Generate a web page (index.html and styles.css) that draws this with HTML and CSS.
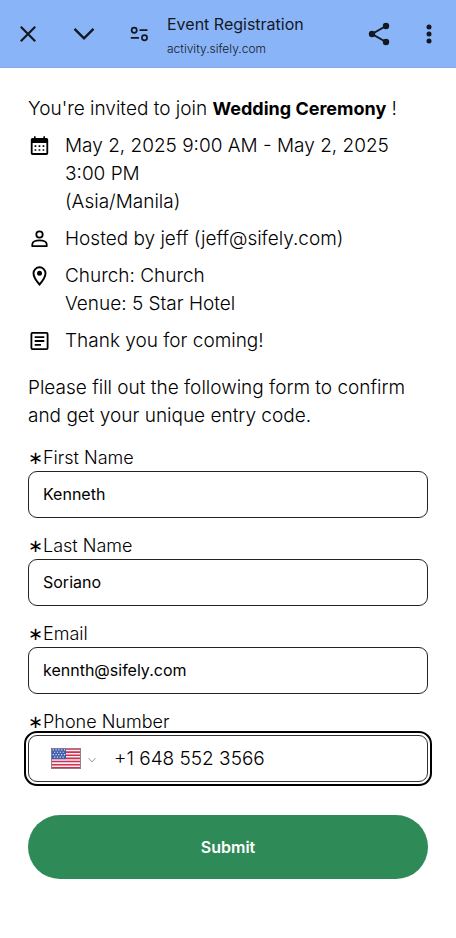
FILE: index.html
```html
<!DOCTYPE html>
<html lang="en">
<head>
<meta charset="utf-8">
<meta name="viewport" content="width=device-width, initial-scale=1">
<title>Event Registration</title>
<link rel="stylesheet" href="styles.css">
</head>
<body>
<header class="bar">
  <button class="bar-btn" type="button" aria-label="Close"><svg width="24" height="24" viewBox="0 0 24 24"><path d="M4.800 4.800 19.200 19.200M19.200 4.800 4.800 19.200" fill="none" stroke="currentColor" stroke-width="2.200"/></svg></button>
  <button class="bar-btn" type="button" aria-label="Minimize"><svg width="24" height="24" viewBox="0 0 24 24"><path d="M2.500 6.800 12 16.300 21.500 6.800" fill="none" stroke="currentColor" stroke-width="2.400"/></svg></button>
  <button class="bar-btn" type="button" aria-label="Site settings"><svg width="24" height="24" viewBox="0 0 24 24"><g fill="none" stroke="currentColor" stroke-width="1.700"><circle cx="6.200" cy="8.200" r="2.600"/><path d="M11.500 8.200H19.500M2.800 15.800H11"/><circle cx="16.500" cy="15.800" r="2.600"/></g></svg></button>
  <div class="bar-text">
    <h1 class="bar-title">Event Registration</h1>
    <span class="bar-host">activity.sifely.com</span>
  </div>
  <button class="bar-btn" type="button" aria-label="Share"><svg width="24" height="24" viewBox="0 0 24 24"><path d="M19 4 5 12 19 20" fill="none" stroke="currentColor" stroke-width="2"/><g fill="currentColor"><circle cx="19" cy="4" r="3.200"/><circle cx="5" cy="12" r="3.200"/><circle cx="19" cy="20" r="3.200"/></g></svg></button>
  <button class="bar-btn" type="button" aria-label="More options"><svg width="24" height="24" viewBox="0 0 24 24" fill="currentColor"><circle cx="12" cy="5" r="2.500"/><circle cx="12" cy="12" r="2.500"/><circle cx="12" cy="19" r="2.500"/></svg></button>
</header>
<main class="page">
  <p class="intro">You're invited to join <strong>Wedding Ceremony</strong> !</p>
  <ul class="details">
    <li class="detail">
      <svg class="detail-icon" width="24" height="24" viewBox="0 0 24 24"><path fill="currentColor" fill-rule="evenodd" d="M6 2.200h1.600v1.900h7.800V2.200H17v1.900h1.500a1.700 1.700 0 0 1 1.700 1.700v13.400a1.700 1.700 0 0 1-1.700 1.700h-14a1.700 1.700 0 0 1-1.700-1.700V5.800a1.700 1.700 0 0 1 1.700-1.700H6zM4.600 9v10h13.800V9z"/><path stroke="currentColor" stroke-width="1.700" d="M6.600 12.200h1.700m2.300 0h1.700m2.300 0h1.700M6.600 16h1.700m2.300 0h1.700m2.300 0h1.700"/></svg>
      <span>May 2, 2025 9:00 AM - May 2, 2025 3:00 PM<br>(Asia/Manila)</span>
    </li>
    <li class="detail">
      <svg class="detail-icon" width="24" height="24" viewBox="0 0 24 24"><g fill="none" stroke="currentColor" stroke-width="1.800" stroke-linejoin="round"><circle cx="11.500" cy="7.500" r="3.200"/><path d="M4.300 19.200v-2c0-5.200 14.400-5.200 14.400 0v2z"/></g></svg>
      <span>Hosted by jeff (jeff@sifely.com)</span>
    </li>
    <li class="detail">
      <svg class="detail-icon" width="24" height="24" viewBox="0 0 24 24"><path fill="none" stroke="currentColor" stroke-width="1.900" d="M11.500 20.500C7.500 16 5.500 12.500 5.500 9.300a6 6 0 0 1 12 0c0 3.200-2 6.700-6 11.200z"/><circle cx="11.500" cy="9.200" r="2.500" fill="currentColor"/></svg>
      <span>Church: Church<br>Venue: 5 Star Hotel</span>
    </li>
    <li class="detail">
      <svg class="detail-icon" width="24" height="24" viewBox="0 0 24 24"><g fill="none" stroke="currentColor" stroke-width="1.800"><rect x="3.400" y="3.900" width="16.200" height="16.200" rx="1"/><path d="M6.700 8.200h9.600M6.700 12h9.600M6.700 15.800H13"/></g></svg>
      <span>Thank you for coming!</span>
    </li>
  </ul>
  <form class="form">
    <p class="lead">Please fill out the following form to confirm and get your unique entry code.</p>
    <div class="field">
      <label class="label" for="first">∗First Name</label>
      <input class="input" id="first" type="text" value="Kenneth">
    </div>
    <div class="field">
      <label class="label" for="last">∗Last Name</label>
      <input class="input" id="last" type="text" value="Soriano">
    </div>
    <div class="field">
      <label class="label" for="email">∗Email</label>
      <input class="input" id="email" type="email" value="kennth@sifely.com">
    </div>
    <div class="field">
      <label class="label" for="phone">∗Phone Number</label>
      <div class="phone">
        <div class="country">
          <svg width="30" height="21" viewBox="0 0 32 22" preserveAspectRatio="none"><path fill="#f4eef2" d="M0 0h32v22H0z"/><path stroke="#d3304f" stroke-width="1.700" d="M0 1h32M0 4.300h32M0 7.600h32M0 10.900h32M0 14.200h32M0 17.500h32M0 20.800h32"/><path fill="#3f5fae" d="M0 0h16v11.700H0z"/><path stroke="#e4ebfa" stroke-width="1.200" stroke-dasharray="1.200 1.800" d="M1.800 2H15M3.300 4.500H15M1.800 7H15M3.300 9.500H15"/><path fill="none" stroke="#8b7f88" d="M.5.5h31v21H.5z"/></svg>
          <svg width="10" height="10" viewBox="0 0 10 10"><path d="M1.500 4 5 8 8.500 4" fill="none" stroke="#999" stroke-width="1"/></svg>
          <select class="country-select" aria-label="Country"><option>United States</option></select>
        </div>
        <input class="phone-input" id="phone" type="tel" value="+1 648 552 3566">
      </div>
    </div>
    <button class="submit" type="submit">Submit</button>
  </form>
</main>
</body>
</html>
```

FILE: styles.css
```css
* {
  box-sizing: border-box;
}

body {
  margin: 0;
  background: #fff;
  color: #000;
  font: 300 19px/28px Inter, sans-serif;
}

p, ul, h1 {
  margin: 0;
  padding: 0;
}

button, input, select {
  font: inherit;
  color: inherit;
}

strong {
  font-size: 18px;
  font-weight: 700;
}

.bar {
  display: flex;
  align-items: center;
  height: 68px;
  padding: 0 7px 0 8px;
  background: #8ab4f8;
  border-bottom: 1px solid #8aa9e0;
  color: #14181f;
}

.bar-btn {
  display: flex;
  flex: none;
  padding: 8px;
  border: 0;
  background: none;
}

.bar-btn + .bar-btn {
  margin-left: 16px;
}

.bar-btn:last-child {
  margin-left: 10px;
}

.bar-text {
  flex: 1;
  min-width: 0;
  margin-left: 7px;
  padding-top: 4px;
}

.bar-title {
  font-size: 16px;
  font-weight: 400;
  line-height: 26px;
}

.bar-host {
  display: block;
  font-size: 12px;
  font-weight: 300;
  line-height: 24px;
}

.page {
  padding: 27px 28px;
}

.details {
  display: grid;
  gap: 9px;
  margin-top: 9px;
  list-style: none;
}

.detail {
  display: flex;
  gap: 13px;
}

.detail-icon {
  flex: none;
  margin-top: 2px;
}

.form {
  display: grid;
  gap: 14px;
  margin-top: 19px;
}

.field {
  display: grid;
}

.label {
  font-size: 18px;
  line-height: 27px;
}

.input {
  width: 100%;
  height: 47px;
  padding: 0 14px 2px;
  border: 1px solid #222;
  border-radius: 9px;
  background: #fff;
  font-size: 16px;
  font-weight: 400;
}

.phone {
  display: flex;
  align-items: center;
  height: 47px;
  border: 1px solid #333;
  border-radius: 9px;
  outline: 2px solid #000;
  outline-offset: 2px;
}

.country {
  position: relative;
  display: flex;
  align-items: center;
  gap: 6px;
  padding: 0 17px 0 22px;
}

.country-select {
  position: absolute;
  inset: 0;
  width: 100%;
  opacity: 0;
}

.phone-input {
  flex: 1;
  min-width: 0;
  padding: 0;
  border: 0;
  outline: 0;
  background: none;
}

.submit {
  height: 64px;
  margin-top: 19px;
  border: 0;
  border-radius: 32px;
  background: #2e8b57;
  color: #fff;
  font-size: 16px;
  font-weight: 600;
}
```
